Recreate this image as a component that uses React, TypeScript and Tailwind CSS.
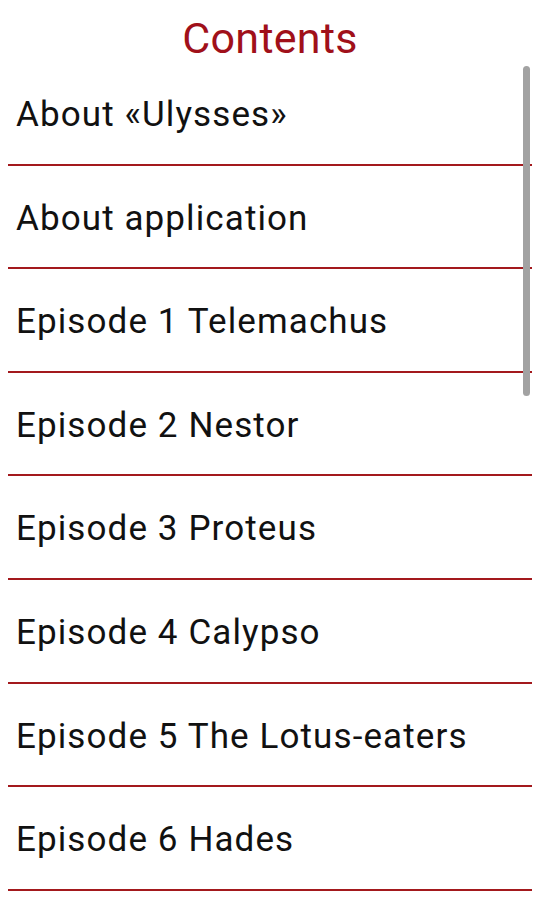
const ITEMS = [
  'About «Ulysses»',
  'About application',
  'Episode 1 Telemachus',
  'Episode 2 Nestor',
  'Episode 3 Proteus',
  'Episode 4 Calypso',
  'Episode 5 The Lotus-eaters',
  'Episode 6 Hades',
];

export default function App() {
  return (
    <div
      className="relative w-[540px] h-[900px] overflow-hidden bg-white"
      style={{ fontFamily: 'Roboto, "Noto Sans", sans-serif' }}
    >
      <div className="h-[62px] flex items-center justify-center">
        <h1 className="text-[43px] leading-none tracking-[0.3px] text-[#a0101a] pt-[14px]">Contents</h1>
      </div>

      <ul className="mx-2">
        {ITEMS.map((item) => (
          <li
            key={item}
            className="h-[103.6px] flex items-center pl-2 pt-[5px] border-b-2 border-[#a3191d] text-[35px] tracking-[1.1px] text-[#111111]"
          >
            {item}
          </li>
        ))}
      </ul>

      {/* scroll indicator */}
      <div className="absolute right-[10px] top-[66px] w-[7px] h-[330px] rounded-full bg-[#a2a2a2]" />
    </div>
  );
}
